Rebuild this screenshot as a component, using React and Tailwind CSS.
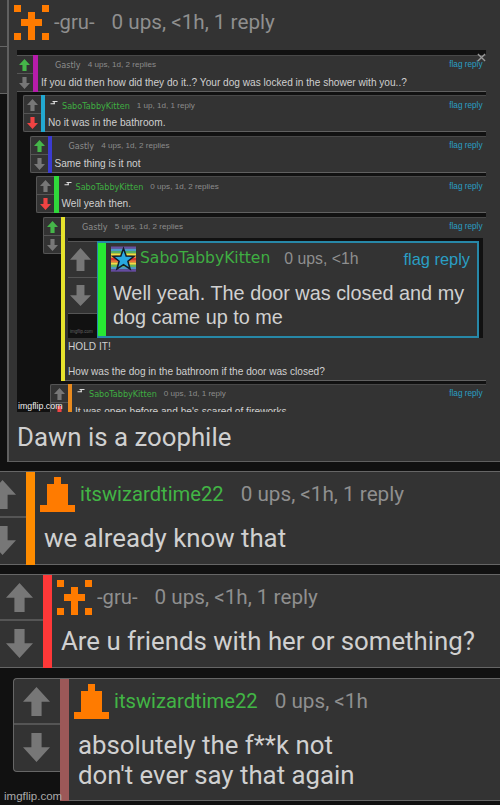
import React from "react";
import clsx from "clsx";

const GRU = ["10001", "00100", "01110", "00100", "10101"];
const WIZARD = ["00100", "01110", "01110", "01110", "11111"];

const PixelAvatar = ({ rows }) => (
    <svg viewBox="0 0 5 5" className="w-[35px] h-[35px] shrink-0" shapeRendering="crispEdges">
        {rows.map((row, y) =>
            row.split("").map((cell, x) =>
                cell === "1" ? <rect key={x + "-" + y} x={x} y={y} width="1" height="1" fill="#ff7b00" /> : null
            )
        )}
    </svg>
);

const Arrow = ({ down, className }) => (
    <svg viewBox="0 0 27 29" preserveAspectRatio="none" className={clsx("shrink-0", down && "rotate-180", className)}>
        <path d="M13.5 0L27 14.8H18.6V29H8.4V14.8H0Z" fill="currentColor" />
    </svg>
);

// vote column + coloured depth bar + text
const Comment = ({ className, voteClass, arrowClass, bar, bodyClass, avatar, name, nameClass, meta, children }) => (
    <div className={clsx("flex shrink-0", className)}>
        <div className={clsx("shrink-0 h-[94px] bg-[#333] border-y border-[#666] flex flex-col overflow-hidden text-[#777]", voteClass)}>
            <div className="h-[46px] border-b-2 border-[#555] shrink-0 pt-[8px]">
                <Arrow className={arrowClass} />
            </div>
            <div className="pt-[8px]">
                <Arrow down className={arrowClass} />
            </div>
        </div>
        <div className={clsx("w-[9px] shrink-0 border-t border-[#666]", bar)} />
        <div className={clsx("flex-1 bg-[#333] border-y border-[#666] pt-[5px] whitespace-nowrap", bodyClass)}>
            <div className="flex items-center h-[35px] pl-[5px]">
                <PixelAvatar rows={avatar} />
                <span className={clsx("ml-[5px] text-[20.2px]", nameClass)}>{name}</span>
                <span className="ml-[17px] text-[20.7px] text-[#8f8f8f]">{meta}</span>
            </div>
            <div className="pl-[9px] pt-[10.5px] text-[25.8px] leading-[30.7px] text-[#d0d0d0]">{children}</div>
        </div>
    </div>
);

const FlagReply = ({ className }) => <span className={clsx("ml-auto text-[#2a9fc4]", className)}>flag reply</span>;

// one row of the embedded thread
const SmallComment = ({ className, bar, vote, name, meta, children }) => {
    const sabo = name === "SaboTabbyKitten";
    return (
        <div className={clsx("flex shrink-0", className)}>
            <div className="w-[18px] h-[37px] shrink-0 bg-[#333] border border-r-0 border-[#555] rounded-l-[2px] flex flex-col items-center">
                <div className="h-[18px] w-full border-b border-[#555] flex justify-center pt-[3px] shrink-0">
                    <Arrow className={clsx("w-[11px] h-[12px]", vote === "up" ? "text-[#45b649]" : "text-[#777]")} />
                </div>
                <Arrow down className={clsx("w-[11px] h-[12px] mt-[3px]", vote === "down" ? "text-[#f04343]" : "text-[#777]")} />
            </div>
            <div className={clsx("shrink-0", bar)} />
            <div className="flex-1 min-w-0 bg-[#333] border-y border-t-[#484848] border-b-[#606060] pl-[3px] whitespace-nowrap">
                <div className="flex h-[18px] pt-px items-center">
                    <span className="w-[14px] h-[10px] shrink-0 -mt-[4px]">
                        {sabo && (
                            <svg viewBox="0 0 14 10" className="w-[14px] h-[10px]">
                                <path d="M4.5 2.5H9.5M6.5 2.5L5.8 4.8M2.5 4.8H7" stroke="#ddd" strokeWidth="1.1" fill="none" />
                            </svg>
                        )}
                    </span>
                    <span className={clsx("font-['DejaVu_Sans'] text-[8.1px]", sabo ? "text-[#3fae42]" : "text-[#8c8c8c]")}>{name}</span>
                    <span className="ml-[7px] text-[8.1px] text-[#8c8c8c]">{meta}</span>
                    <FlagReply className="text-[8.2px] mr-[3.5px]" />
                </div>
                {children}
            </div>
        </div>
    );
};

const Line = ({ children }) => <div className="text-[10.12px] leading-[17px] text-[#d0d0d0]">{children}</div>;

const StarAvatar = () => (
    <svg viewBox="0 0 26 26" className="w-[25px] h-[26px] shrink-0">
        {["#6a50a0", "#4c9ac8", "#54b064", "#efe344", "#f39a36", "#d93434", "#ef7138", "#f3dc46", "#60b45e", "#4d96c5", "#654ba0"].map((c, i) => (
            <rect key={i} y={i * 2.37} width="26" height="2.5" fill={c} />
        ))}
        <path d="M13 2L15.8 9.8L24 10.2L17.6 15.3L19.8 23.4L13 18.8L6.2 23.4L8.4 15.3L2 10.2L10.2 9.8Z" fill="#29a9e0" stroke="#111c28" strokeWidth="1.6" />
    </svg>
);

const DoorQuote = () => (
    <div className="w-[415px] h-[100px] bg-[#111] pt-[3px] flex">
        <div className="w-[29px] shrink-0 text-[#777]">
            <div className="h-[37px] bg-[#333] border-t border-b border-[#555] pt-[6px] pl-[2px]">
                <Arrow className="w-[21px] h-[23px]" />
            </div>
            <div className="h-[36px] bg-[#333] border-b border-[#555] pt-[7px] pl-[2px]">
                <Arrow down className="w-[21px] h-[21px]" />
            </div>
            <div className="pt-[14px] pl-[2px] text-[4.5px] leading-[8px] text-[#666]">imgflip.com</div>
        </div>
        <div className="w-[382px] h-[97px] border-2 border-l border-[#2788a8] bg-[#333] flex">
            <div className="w-[8px] bg-[#27e833]" />
            <div className="flex-1 pl-[5px]">
                <div className="flex items-center pt-[3px] h-[30px]">
                    <StarAvatar />
                    <span className="ml-[4px] font-['DejaVu_Sans'] text-[15.55px] text-[#3fae42]">SaboTabbyKitten</span>
                    <span className="ml-[14px] text-[15.8px] text-[#8f8f8f]">0 ups, &lt;1h</span>
                    <FlagReply className="text-[16.4px] mr-[7px]" />
                </div>
                <div className="pl-[2px] pt-[8px] text-[19.85px] leading-[24px] text-[#d0d0d0]">
                    Well yeah. The door was closed and my
                    <br />
                    dog came up to me
                </div>
            </div>
        </div>
    </div>
);

const ThreadImage = () => (
    <div className="relative w-[469px] h-[362px] bg-[#111] overflow-hidden font-['Liberation_Sans',sans-serif] pt-[5px] flex flex-col gap-[3.4px]">
        <SmallComment className="-ml-[2px]" bar="bg-[#b71cab] w-[5px]" vote="up" name="Gastly" meta="4 ups, 1d, 2 replies">
            <Line>If you did then how did they do it..? Your dog was locked in the shower with you..?</Line>
        </SmallComment>
        <SmallComment className="ml-[5.5px]" bar="bg-[#22a8d0] w-[4.5px]" vote="down" name="SaboTabbyKitten" meta="1 up, 1d, 1 reply">
            <Line>No it was in the bathroom.</Line>
        </SmallComment>
        <SmallComment className="ml-[12.5px]" bar="bg-[#3b3bd0] w-[4px]" vote="up" name="Gastly" meta="4 ups, 1d, 2 replies">
            <Line>Same thing is it not</Line>
        </SmallComment>
        <SmallComment className="ml-[19px]" bar="bg-[#2fd83a] w-[4.5px]" vote="down" name="SaboTabbyKitten" meta="0 ups, 1d, 2 replies">
            <Line>Well yeah then.</Line>
        </SmallComment>
        <SmallComment className="ml-[25.5px] h-[164px]" bar="bg-[#e6e22c] w-[4.5px]" vote="up" name="Gastly" meta="5 ups, 1d, 2 replies">
            <div className="pt-[2px]">
                <DoorQuote />
            </div>
            <Line>HOLD IT!</Line>
            <div className="h-[8px]" />
            <Line>How was the dog in the bathroom if the door was closed?</Line>
        </SmallComment>
        <SmallComment className="ml-[32.5px]" bar="bg-[#e88a1f] w-[4.5px]" vote="down" name="SaboTabbyKitten" meta="0 ups, 1d, 1 reply">
            <Line>It was open before and he's scared of fireworks</Line>
        </SmallComment>
        <svg viewBox="0 0 10 10" className="absolute right-0 top-[3px] w-[9px] h-[9px]">
            <path d="M1 1L9 9M9 1L1 9" stroke="#999" strokeWidth="1.5" />
        </svg>
        <span className="absolute left-[1px] bottom-0 text-[8.8px] leading-[12px] text-[#eee]">imgflip.com</span>
    </div>
);

const App = () => {
    return (
        <div className="relative w-[500px] h-[805px] bg-[#111] overflow-hidden flex flex-col font-[Roboto,sans-serif]">
            <div className="flex h-[462px] shrink-0">
                <div className="w-[7px]">
                    <div className="h-[47px] bg-[#333] border-b border-[#666]" />
                    <div className="h-[47px] bg-[#333] border-b border-[#666]" />
                </div>
                <div className="flex-1 bg-[#333] border-l-2 border-b border-[#606060] pt-[5px] whitespace-nowrap">
                    <div className="flex items-center h-[35px] pl-[5px]">
                        <PixelAvatar rows={GRU} />
                        <span className="ml-[5px] text-[20.2px] text-[#8f8f8f]">-gru-</span>
                        <span className="ml-[17px] text-[20.7px] text-[#8f8f8f]">0 ups, &lt;1h, 1 reply</span>
                    </div>
                    <div className="pl-[8px] pt-[10px]">
                        <ThreadImage />
                        <div className="pt-[10px] text-[25.8px] leading-[31px] text-[#d0d0d0]">Dawn is a zoophile</div>
                    </div>
                </div>
            </div>
            <Comment className="mt-[9px]" voteClass="w-[25.5px]" arrowClass="w-[27px] h-[29px] -ml-[11px]" bar="bg-[#ff8c00]" bodyClass="pl-[0.5px]" avatar={WIZARD} name="itswizardtime22" nameClass="text-[#42b545]" meta="0 ups, <1h, 1 reply">
                we already know that
            </Comment>
            <Comment className="mt-[9px]" voteClass="w-[42.5px]" arrowClass="w-[27px] h-[29px] ml-[6px]" bar="bg-[#ff3838]" bodyClass="pl-[0.5px]" avatar={GRU} name="-gru-" nameClass="text-[#8f8f8f]" meta="0 ups, <1h, 1 reply">
                Are u friends with her or something?
            </Comment>
            <Comment className="mt-[10px] ml-[13px] h-[123px]" voteClass="w-[47px] border-l rounded-l-[4px]" arrowClass="w-[27px] h-[29px] ml-[9px]" bar="bg-[#9c5858]" avatar={WIZARD} name="itswizardtime22" nameClass="text-[#42b545]" meta="0 ups, <1h">
                absolutely the f**k not
                <br />
                don't ever say that again
            </Comment>
            <span className="absolute left-[4px] bottom-[1px] text-[11.5px] leading-[15px] text-[#aaa] font-['Liberation_Sans',sans-serif]">imgflip.com</span>
        </div>
    );
};

export default App;
